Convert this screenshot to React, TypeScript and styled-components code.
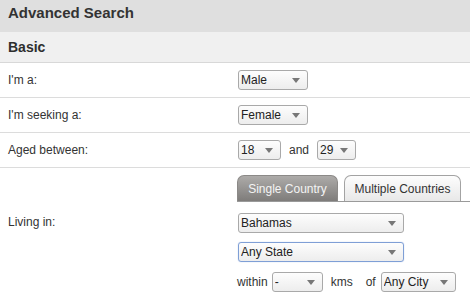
import React from "react";
import styled, { createGlobalStyle } from "styled-components";

const GlobalStyle = createGlobalStyle`
  * { box-sizing: border-box; }
  body {
    margin: 0;
    background: #ffffff;
    font-family: "Liberation Sans", Arial, sans-serif;
    color: #333333;
  }
`;

const Page = styled.div`
  width: 470px;
  height: 303px;
  overflow: hidden;
  background: #ffffff;
`;

const Header = styled.div`
  height: 32px;
  background: #dfdfdf;
  padding: 4px 8px 0;
  font-size: 15px;
  line-height: 18px;
  font-weight: bold;
  color: #333333;
`;

const Section = styled.div`
  height: 31px;
  background: #f0f0f0;
  border-bottom: 1px solid #d8d8d8;
  padding: 0 8px;
  display: flex;
  align-items: center;
  font-size: 14px;
  font-weight: bold;
  color: #2e2e2e;
`;

const Row = styled.div`
  display: grid;
  grid-template-columns: 230px 1fr;
  align-items: center;
  height: 35px;
  padding-left: 8px;
  border-bottom: 1px solid #dcdcdc;
`;

const Label = styled.div`
  font-size: 12px;
  color: #333333;
`;

const Inline = styled.div`
  display: flex;
  align-items: center;
`;

const Word = styled.span<{ $ml?: number; $mr?: number }>`
  font-size: 12px;
  color: #333333;
  margin-left: ${(p) => p.$ml ?? 0}px;
  margin-right: ${(p) => p.$mr ?? 0}px;
`;

const SelectBox = styled.div<{ $w: number; $focus?: boolean }>`
  width: ${(p) => p.$w}px;
  height: 20px;
  display: flex;
  align-items: center;
  padding-left: 2px;
  border: 1px solid ${(p) => (p.$focus ? "#7f9fd6" : "#a9a9a9")};
  border-radius: 3px;
  background: linear-gradient(#fdfdfd, #ededed);
  font-size: 12px;
  color: #222222;
  box-shadow: ${(p) => (p.$focus ? "0 0 1px #9db5e0" : "none")};
`;

const SelectText = styled.span`
  flex: 1;
  white-space: nowrap;
  overflow: hidden;
`;

const Arrow = styled.span`
  width: 0;
  height: 0;
  margin-right: 7px;
  border-left: 4px solid transparent;
  border-right: 4px solid transparent;
  border-top: 5px solid #777777;
`;

const Select = ({ value, w, focus }: { value: string; w: number; focus?: boolean }) => (
  <SelectBox $w={w} $focus={focus}>
    <SelectText>{value}</SelectText>
    <Arrow />
  </SelectBox>
);

const LivingRow = styled.div`
  display: grid;
  grid-template-columns: 230px 1fr;
  padding-left: 8px;
  padding-top: 7px;
`;

const LivingLabel = styled(Label)`
  grid-column: 1;
  grid-row: 2;
  align-self: end;
  margin-bottom: 4px;
`;

const TabBar = styled.div`
  grid-column: 2;
  grid-row: 1;
  margin-left: -1px;
  display: flex;
  align-items: flex-end;
  gap: 6px;
  height: 27px;
  border-bottom: 1px solid #9a9a9a;
`;

const Tab = styled.div<{ $active?: boolean; $w: number }>`
  width: ${(p) => p.$w}px;
  height: 26px;
  display: flex;
  align-items: center;
  justify-content: center;
  font-size: 12px;
  border: 1px solid ${(p) => (p.$active ? "#8b8987" : "#a3a3a3")};
  border-bottom: none;
  border-radius: 7px 7px 0 0;
  background: ${(p) =>
    p.$active
      ? "linear-gradient(#adaba9, #7e7c7a)"
      : "linear-gradient(#fdfdfd, #e8e8e8)"};
  color: ${(p) => (p.$active ? "#f4f4f4" : "#333333")};
`;

const Cell = styled.div<{ $row: number; $mt: number }>`
  grid-column: 2;
  grid-row: ${(p) => p.$row};
  margin-top: ${(p) => p.$mt}px;
  display: flex;
  align-items: center;
`;

const WithinCell = styled(Cell)`
  margin-left: -1px;
`;

export default function App() {
  return (
    <>
      <GlobalStyle />
      <Page>
        <Header>Advanced Search</Header>
        <Section>Basic</Section>
        <Row>
          <Label>I'm a:</Label>
          <Select value="Male" w={70} />
        </Row>
        <Row>
          <Label>I'm seeking a:</Label>
          <Select value="Female" w={70} />
        </Row>
        <Row>
          <Label>Aged between:</Label>
          <Inline>
            <Select value="18" w={43} />
            <Word $ml={8} $mr={8}>and</Word>
            <Select value="29" w={39} />
          </Inline>
        </Row>
        <LivingRow>
          <TabBar>
            <Tab $active $w={101}>Single Country</Tab>
            <Tab $w={117}>Multiple Countries</Tab>
          </TabBar>
          <LivingLabel>Living in:</LivingLabel>
          <Cell $row={2} $mt={11}>
            <Select value="Bahamas" w={166} />
          </Cell>
          <Cell $row={3} $mt={9}>
            <Select value="Any State" w={166} focus />
          </Cell>
          <WithinCell $row={4} $mt={10}>
            <Word $mr={4}>within</Word>
            <Select value="-" w={51} />
            <Word $ml={8} $mr={13}>kms</Word>
            <Word $mr={5}>of</Word>
            <Select value="Any City" w={75} />
          </WithinCell>
        </LivingRow>
      </Page>
    </>
  );
}
